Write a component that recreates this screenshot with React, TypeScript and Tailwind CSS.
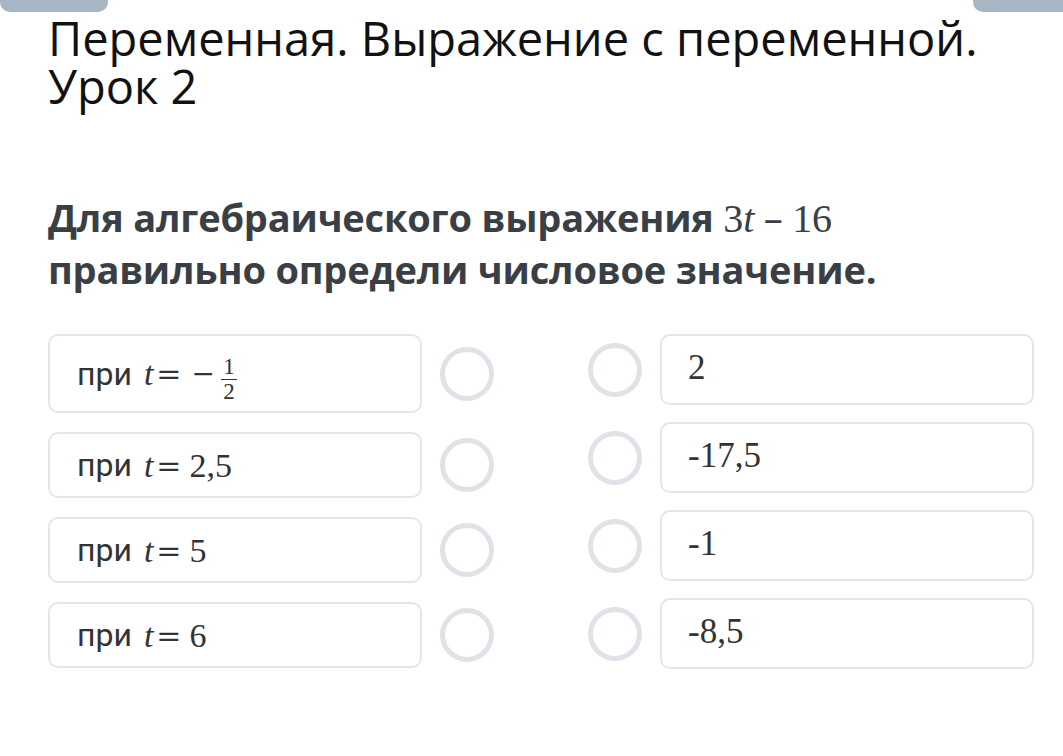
import React from "react";

const serif = "font-['Liberation_Serif',serif]";
const opSerif = "font-['DejaVu_Serif',serif]";

function Circle() {
  return <div className="w-[54px] h-[54px] rounded-full border-[5px] border-[#dfe3e8] shrink-0" />;
}

function T() {
  return <span className={`${serif} italic`}>t</span>;
}

function LeftCard({ children, tall }: { children: React.ReactNode; tall?: boolean }) {
  return (
    <div className="flex items-center gap-[18px]">
      <div
        className={`w-[374px] ${tall ? "h-[79px]" : "h-[66px]"} rounded-[10px] border-2 border-[#e6e6e6] flex items-center pl-[27px] text-[32px] text-[#333] font-['Roboto',sans-serif]`}
      >
        {children}
      </div>
      <Circle />
    </div>
  );
}

function RightCard({ value }: { value: string }) {
  return (
    <div className="flex items-center gap-[18px]">
      <Circle />
      <div className="w-[374px] h-[71px] rounded-[10px] border-2 border-[#e6e6e6] flex items-center pl-[26px] pb-[2px]">
        <span className={`${serif} text-[35px] text-[#333]`}>{value}</span>
      </div>
    </div>
  );
}

function Eq({ children }: { children: React.ReactNode }) {
  return (
    <span className="ml-[12px] flex items-center text-[34px]">
      <T />
      <span className={`${opSerif} ml-[3px] text-[30px]`}>=</span>
      {children}
    </span>
  );
}

export default function App() {
  return (
    <div className="w-[1063px] h-[756px] bg-white relative overflow-hidden">
      <div className="absolute left-0 top-0 w-[108px] h-[12px] bg-[#a6b6c5] rounded-b-[10px]" />
      <div className="absolute right-0 top-0 w-[90px] h-[12px] bg-[#a6b6c5] rounded-bl-[10px]" />
      <div className="pl-[48px] pt-[14px]">
        <h1 className="text-[47px] leading-[48px] text-[#111] font-['Open_Sans',sans-serif]">
          Переменная. Выражение с переменной.
          <br />
          Урок 2
        </h1>
        <p className="mt-[82px] text-[38px] leading-[50px] font-bold text-[#3a3f46] font-['Open_Sans',sans-serif] tracking-[-0.2px]">
          Для алгебраического выражения{" "}
          <span className={`${serif} font-normal text-[40px]`}>
            3<span className="italic">t</span>
          </span>{" "}
          <span className="font-normal">–</span>{" "}
          <span className={`${serif} font-normal text-[40px]`}>16</span>
          <br />
          правильно определи числовое значение.
        </p>
        <div className="mt-[40px] flex gap-[94px]">
          <div className="flex flex-col gap-[19px]">
            <LeftCard tall>
              <span>при</span>
              <Eq>
                <span className={`${opSerif} ml-[10px] text-[28px]`}>−</span>
                <span className={`${serif} ml-[6px] mt-[12px] flex flex-col items-center text-[23px] leading-[20px]`}>
                  <span>1</span>
                  <span className="w-[16px] h-[1.5px] bg-[#333] my-[2px]" />
                  <span>2</span>
                </span>
              </Eq>
            </LeftCard>
            <LeftCard>
              <span>при</span>
              <Eq>
                <span className={`${serif} ml-[8px]`}>2,5</span>
              </Eq>
            </LeftCard>
            <LeftCard>
              <span>при</span>
              <Eq>
                <span className={`${serif} ml-[8px]`}>5</span>
              </Eq>
            </LeftCard>
            <LeftCard>
              <span>при</span>
              <Eq>
                <span className={`${serif} ml-[8px]`}>6</span>
              </Eq>
            </LeftCard>
          </div>
          <div className="flex flex-col gap-[17px]">
            <RightCard value="2" />
            <RightCard value="-17,5" />
            <RightCard value="-1" />
            <RightCard value="-8,5" />
          </div>
        </div>
      </div>
    </div>
  );
}
